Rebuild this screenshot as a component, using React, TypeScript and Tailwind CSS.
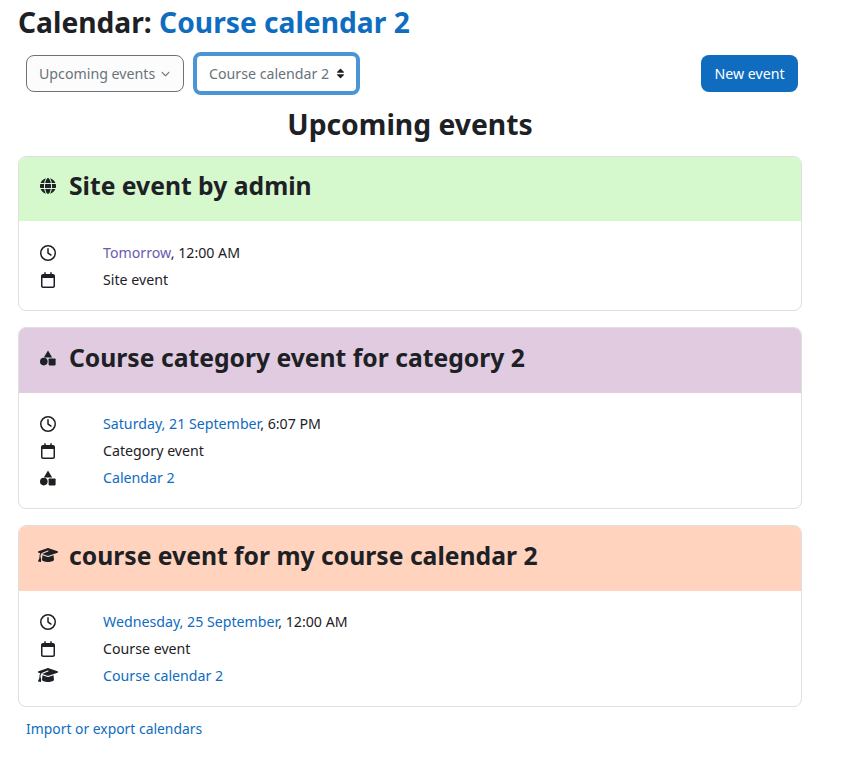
import { FaChevronDown, FaGlobe, FaGraduationCap, FaRegCalendar, FaRegClock, FaSort } from 'react-icons/fa6'
import type { ReactNode } from 'react'

function Shapes() {
  return (
    <svg viewBox="0 0 16 16" className="h-[1em] w-[1em]" fill="currentColor">
      <path d="M8 .5 12.2 7.5H3.8Z" />
      <circle cx="3.8" cy="11.6" r="3.8" />
      <rect x="8.6" y="8.4" width="7" height="7" rx="0.8" />
    </svg>
  )
}

function Cap() {
  return <FaGraduationCap className="-mt-[1px] -ml-[2px] text-[20px]" />
}

function Row({ icon, children }: { icon: ReactNode; children: ReactNode }) {
  return (
    <div className="flex h-[27px] items-center">
      <div className="flex w-[63px] justify-start text-[16px] text-[#1d2125]">{icon}</div>
      <div>{children}</div>
    </div>
  )
}

function EventCard({ title, icon, color, tall, children }: { title: string; icon: ReactNode; color: string; tall?: boolean; children: ReactNode }) {
  return (
    <div className="overflow-hidden rounded-lg border border-[#dfdfdf] bg-white">
      <div className={`flex items-center pb-[6px] pl-[21px] ${tall ? 'h-[65px]' : 'h-[64px]'} ${color}`}>
        <div className="w-[29px] text-[16px] text-[#1d2125]">{icon}</div>
        <h3 className="text-[24.7px] font-bold text-[#1d2125]">{title}</h3>
      </div>
      <div className={`pb-[17px] pl-[21px] ${tall ? 'pt-[17px]' : 'pt-[18px]'}`}>{children}</div>
    </div>
  )
}

export default function App() {
  return (
    <div className="min-h-[765px] w-[847px] bg-white pl-[18px] text-[14.2px] text-[#1d2125] [font-family:'Noto_Sans',sans-serif]">
      <h2 className="h-[52px] pt-[3px] text-[28.2px] leading-[38px] font-bold">
        Calendar: <a className="text-[#0f6cbf]">Course calendar 2</a>
      </h2>
      <div className="flex h-[43px] w-[780px] items-center pl-[8px]">
        <div className="flex h-[37px] w-[158px] items-center rounded-lg border border-[#6a737b] bg-[#fcfcfc] pl-[12px] text-[#6a737b]">
          Upcoming events
          <FaChevronDown className="ml-[6px] text-[9px]" />
        </div>
        <div className="ml-[9px] flex h-[43px] w-[167px] items-center rounded-lg border-4 border-[#4b94d6] bg-white pl-[12px] text-[#6a737b]">
          Course calendar 2
          <FaSort className="ml-[6px] text-[11px] text-[#1d2125]" />
        </div>
        <button className="ml-auto h-[37px] w-[97px] rounded-lg bg-[#0f6cbf] text-white">New event</button>
      </div>
      <div className="w-[784px]">
        <h2 className="h-[61px] pt-[10px] text-center text-[28.3px] leading-[38px] font-bold">Upcoming events</h2>
        <div className="flex flex-col gap-[16px]">
          <EventCard title="Site event by admin" color="bg-[#d6f8cd]" icon={<FaGlobe />}>
            <Row icon={<FaRegClock />}>
              <a className="text-[#6a5cb0]">Tomorrow</a>, 12:00 AM
            </Row>
            <Row icon={<FaRegCalendar />}>Site event</Row>
          </EventCard>
          <EventCard title="Course category event for category 2" color="bg-[#e0cbe0]" icon={<Shapes />} tall>
            <Row icon={<FaRegClock />}>
              <a className="text-[#0f6cbf]">Saturday, 21 September</a>, 6:07 PM
            </Row>
            <Row icon={<FaRegCalendar />}>Category event</Row>
            <Row icon={<Shapes />}>
              <a className="text-[#0f6cbf]">Calendar 2</a>
            </Row>
          </EventCard>
          <EventCard title="course event for my course calendar 2" color="bg-[#ffd3bd]" icon={<Cap />} tall>
            <Row icon={<FaRegClock />}>
              <a className="text-[#0f6cbf]">Wednesday, 25 September</a>, 12:00 AM
            </Row>
            <Row icon={<FaRegCalendar />}>Course event</Row>
            <Row icon={<Cap />}>
              <a className="text-[#0f6cbf]">Course calendar 2</a>
            </Row>
          </EventCard>
        </div>
      </div>
      <a className="mt-[12px] ml-[8px] block text-[13.9px] text-[#0f6cbf]">Import or export calendars</a>
    </div>
  )
}
